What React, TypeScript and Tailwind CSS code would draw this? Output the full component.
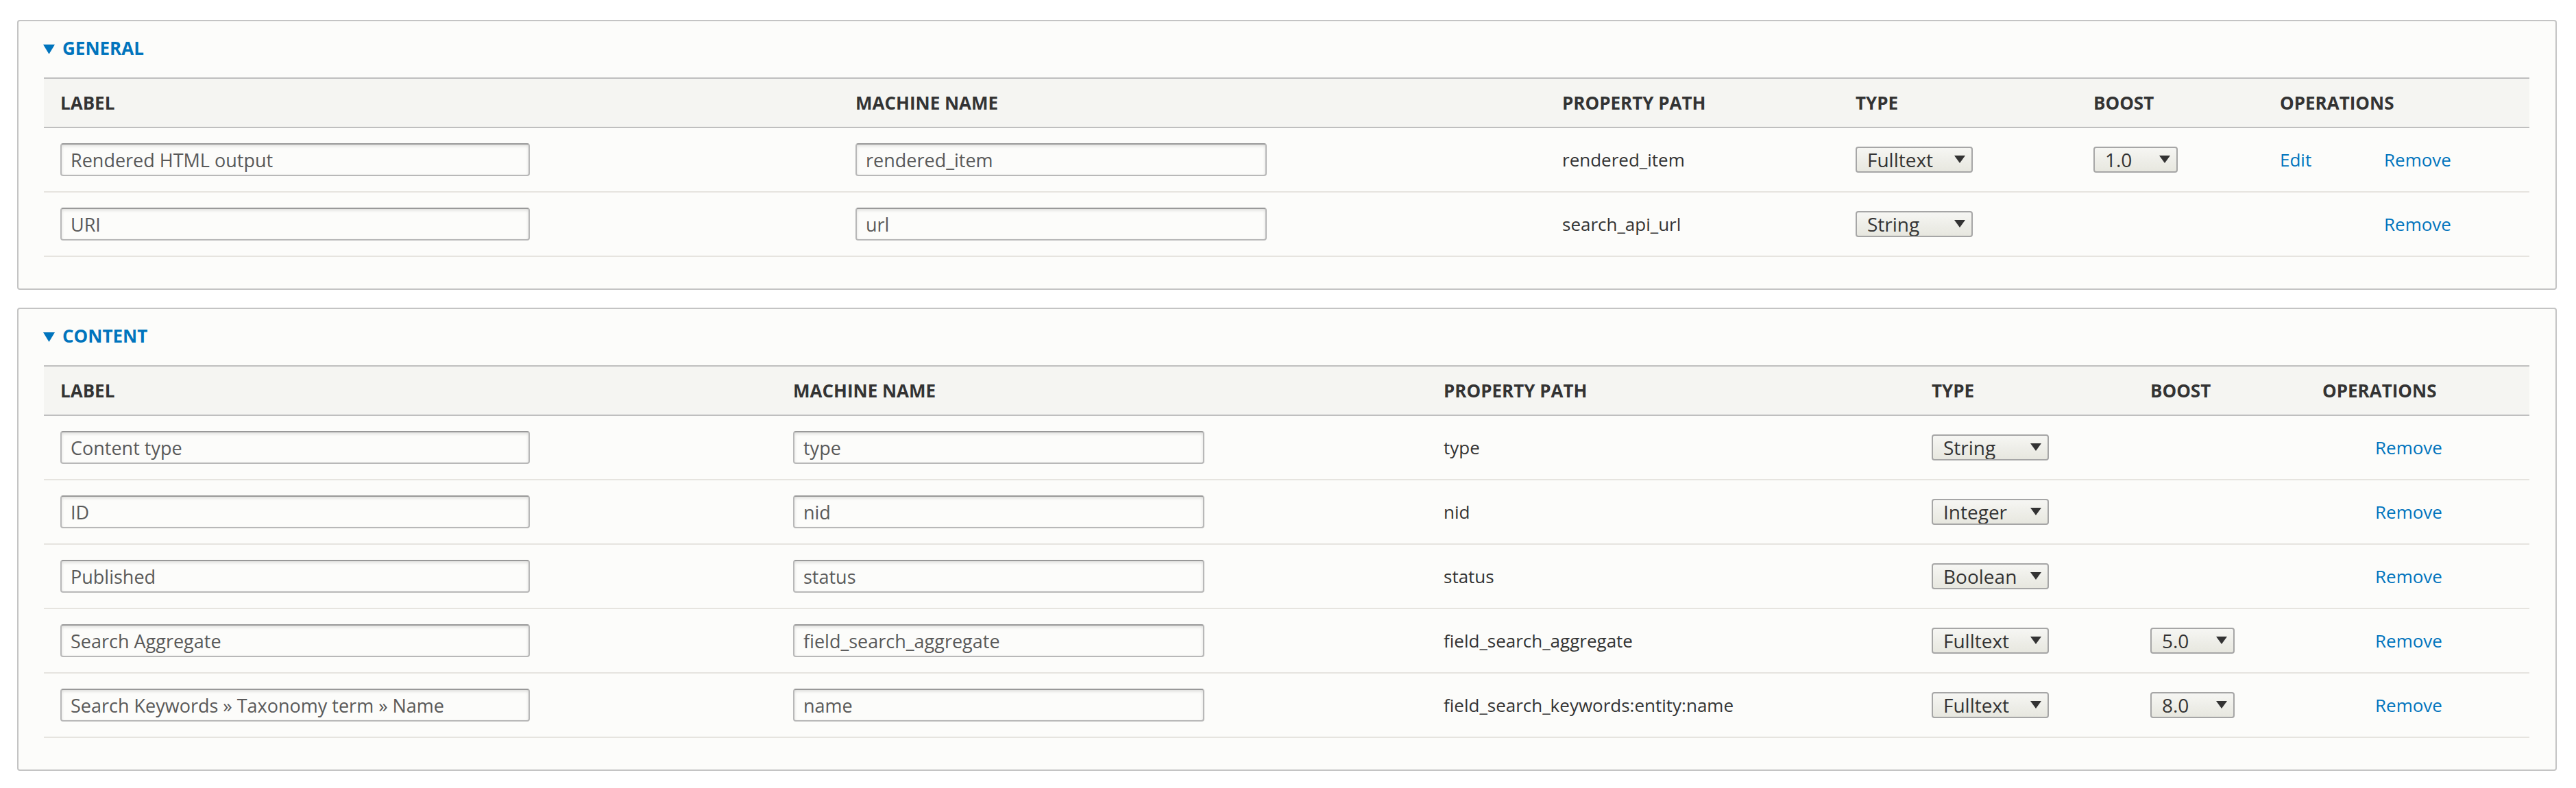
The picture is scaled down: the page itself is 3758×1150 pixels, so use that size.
type Field = {
  label: string
  machine: string
  path: string
  type: string
  boost?: string
  edit?: boolean
}

const general: Field[] = [
  { label: 'Rendered HTML output', machine: 'rendered_item', path: 'rendered_item', type: 'Fulltext', boost: '1.0', edit: true },
  { label: 'URI', machine: 'url', path: 'search_api_url', type: 'String' },
]

const content: Field[] = [
  { label: 'Content type', machine: 'type', path: 'type', type: 'String' },
  { label: 'ID', machine: 'nid', path: 'nid', type: 'Integer' },
  { label: 'Published', machine: 'status', path: 'status', type: 'Boolean' },
  { label: 'Search Aggregate', machine: 'field_search_aggregate', path: 'field_search_aggregate', type: 'Fulltext', boost: '5.0' },
  { label: 'Search Keywords » Taxonomy term » Name', machine: 'name', path: 'field_search_keywords:entity:name', type: 'Fulltext', boost: '8.0' },
]

function Select({ value, width }: { value: string; width: string }) {
  return (
    <div className={`relative h-[38px] ${width}`}>
      <select
        value={value}
        onChange={() => {}}
        className="h-full w-full appearance-none rounded-[4px] border-2 border-[#a6a6a6] bg-linear-to-b from-[#f6f6f3] to-[#e7e7df] pl-[15px] pr-[30px] text-[28px] leading-[34px] text-[#333] outline-none"
      >
        <option>{value}</option>
      </select>
      <svg className="pointer-events-none absolute right-[11px] top-[13px]" width="16" height="11" viewBox="0 0 16 11" aria-hidden="true">
        <polygon points="0,0 16,0 8,11" fill="#333" />
      </svg>
    </div>
  )
}

function TextInput({ value, width }: { value: string; width: string }) {
  return (
    <input
      readOnly
      value={value}
      className={`h-[48px] ${width} rounded-[4px] border-2 border-[#b8b8b8] border-t-[#999] bg-[#fcfcfa] pl-[13px] text-[27px] text-[#595959] shadow-[inset_0_2px_4px_rgba(0,0,0,0.125)] outline-none`}
    />
  )
}

function FieldGroup({ title, rows, cols }: { title: string; rows: Field[]; cols: string }) {
  return (
    <div className="rounded-[4px] border-2 border-[#c4c4c4] bg-[#fcfcfa] pb-[46px] pl-[37px] pr-[38px] pt-[20px]">
      <div className="mb-[23px] flex h-[39px] items-center gap-[11px] text-[26px] font-bold uppercase leading-[39px] text-[#0074bd]">
        <svg className="-ml-[1px] mt-[3px]" width="17" height="14" viewBox="0 0 17 14" aria-hidden="true">
          <polygon points="0,0 17,0 8.5,14" fill="#0074bd" />
        </svg>
        <span>{title}</span>
      </div>
      <div className={`grid h-[74px] items-center border-y-2 border-[#bfbfbf] bg-[#f5f5f2] text-[26px] font-bold uppercase text-[#333] ${cols}`}>
        <div className="pl-[24px]">Label</div>
        <div className="pl-[24px]">Machine name</div>
        <div className="pl-[24px]">Property path</div>
        <div className="pl-[24px]">Type</div>
        <div className="pl-[24px]">Boost</div>
        <div className="col-span-2 pl-[24px]">Operations</div>
      </div>
      {rows.map((r) => (
        <div key={r.machine} className={`grid h-[94px] items-center border-b-2 border-[#e6e4df] text-[26px] text-[#333] ${cols}`}>
          <div className="pl-[24px]">
            <TextInput value={r.label} width="w-[685px]" />
          </div>
          <div className="pl-[24px]">
            <TextInput value={r.machine} width="w-[600px]" />
          </div>
          <div className="pl-[24px]">{r.path}</div>
          <div className="pl-[24px]">
            <Select value={r.type} width="w-[171px]" />
          </div>
          <div className="pl-[24px]">{r.boost && <Select value={r.boost} width="w-[123px]" />}</div>
          <div className="pl-[24px]">{r.edit && <a className="text-[#0074bd]">Edit</a>}</div>
          <div className="pl-[24px]">
            <a className="text-[#0074bd]">Remove</a>
          </div>
        </div>
      ))}
    </div>
  )
}

export default function App() {
  return (
    <div className="min-h-[1150px] bg-white pl-[25px] pr-[28px] pt-[29px] font-['Open_Sans',sans-serif]">
      <div className="flex flex-col gap-[26px]">
        <FieldGroup title="General" rows={general} cols="grid-cols-[1160px_1031px_428px_347px_272px_152px_236px]" />
        <FieldGroup title="Content" rows={content} cols="grid-cols-[1069px_949px_712px_319px_251px_77px_249px]" />
      </div>
    </div>
  )
}
